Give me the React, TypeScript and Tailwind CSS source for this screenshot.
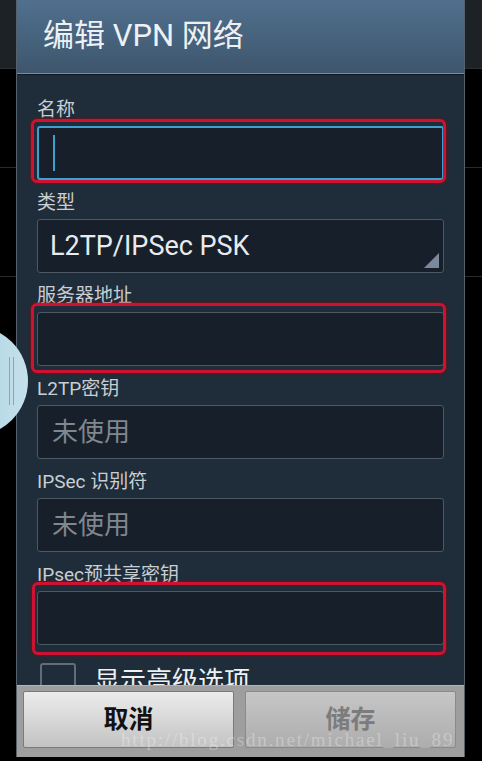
import React from 'react';

const font = { fontFamily: 'Roboto, "Noto Sans CJK SC", sans-serif' };

const Field = ({
  label,
  placeholder,
  focused,
  mark,
}: {
  label: string;
  placeholder?: string;
  focused?: boolean;
  mark?: string;
}) => (
  <div className="mb-[11px]">
    <div className="h-[24px] text-[19px] leading-[24px] text-[#c9ced3]">{label}</div>
    <div className="relative mt-[4px]">
      <div
        className={`flex h-[54px] items-center rounded-[3px] bg-[#17202a] px-[14px] ${
          focused ? 'border-2 border-[#3f9fcf]' : 'border border-[#4c5864]'
        }`}
      >
        {focused && <div className="h-[36px] w-[2px] bg-[#3f9fcf]" />}
        {placeholder && <span className="text-[26px] text-[#80878e]">{placeholder}</span>}
      </div>
      {mark && (
        <div className={`pointer-events-none absolute rounded-[6px] border-[3px] border-[#d01232] shadow-[0_0_3px_#a00] ${mark}`} />
      )}
    </div>
  </div>
);

export default function App() {
  return (
    <div className="relative h-[761px] w-[482px] overflow-hidden bg-black" style={font}>
      {/* page behind the dialog */}
      <div className="flex flex-col">
        <div className="h-[69px] border-b border-[#2c3136] bg-[#1d2227]" />
        <div className="h-[99px] border-b border-[#2a2a2a]" />
        <div className="h-[109px] border-b border-[#2a2a2a]" />
      </div>

      {/* dialog */}
      <div className="absolute left-[16px] top-0 flex h-[757px] w-[449px] flex-col border-x border-[#56616b] bg-[#1f2c39]">
        <div className="flex h-[74px] items-center border-b border-[#7d8c99] bg-gradient-to-b from-[#50708e] to-[#3e566d] pl-[26px]">
          <span className="text-[31px] text-[#eef1f4]">编辑 VPN 网络</span>
        </div>
        <div className="h-[611px] overflow-hidden border-t border-[#101a24] px-[20px] pt-[23px]">
          <Field label="名称" focused mark="-left-[6px] -right-[2px] -top-[7px] -bottom-[3px]" />
          <div className="mb-[11px]">
            <div className="h-[24px] text-[19px] leading-[24px] text-[#c9ced3]">类型</div>
            <div className="relative mt-[4px] flex h-[54px] items-center rounded-[3px] border border-[#4c5864] bg-[#17202a] px-[12px]">
              <span className="text-[27px] text-[#e8ebee]">L2TP/IPSec PSK</span>
              <svg className="absolute bottom-[4px] right-[4px]" width="15" height="15" viewBox="0 0 15 15">
                <polygon points="15,0 15,15 0,15" fill="#7a8a9c" />
              </svg>
            </div>
          </div>
          <Field label="服务器地址" mark="-left-[6px] -right-[2px] -top-[9px] -bottom-[7px]" />
          <Field label="L2TP密钥" placeholder="未使用" />
          <Field label="IPSec 识别符" placeholder="未使用" />
          <Field label="IPsec预共享密钥" mark="-left-[5px] -right-[2px] -top-[9px] -bottom-[10px]" />
          <div className="mt-[18px] flex items-start gap-[18px] pl-[3px]">
            <div className="h-[36px] w-[36px] shrink-0 rounded-[3px] border-2 border-[#636d77]" />
            <span className="text-[26px] leading-[36px] text-[#eef1f4]">显示高级选项</span>
          </div>
        </div>
        <div className="flex flex-1 gap-[11px] border-t border-[#b4b4b4] bg-[#9e9e9e] pl-[6px] pr-[8px] pt-[5px]">
          <div className="flex h-[57px] flex-1 items-center justify-center rounded-[2px] border border-[#7a7a7a] bg-gradient-to-b from-[#ececec] to-[#c3c3c3]">
            <span className="text-[25px] font-bold text-[#111]">取消</span>
          </div>
          <div className="flex h-[57px] flex-1 items-center justify-center rounded-[2px] border border-[#8a8a8a] bg-gradient-to-b from-[#c6c6c6] to-[#adadad]">
            <span className="text-[25px] font-bold text-[#7c7c7c]">储存</span>
          </div>
        </div>
      </div>

      {/* side handle */}
      <div className="absolute left-[-82px] top-[326px] h-[110px] w-[110px] rounded-full bg-gradient-to-r from-[#9cc6da] to-[#c5e1ec]">
        <div className="absolute left-[91px] top-[31px] h-[48px] w-[1px] bg-[#7ea7bb]" />
        <div className="absolute left-[95px] top-[31px] h-[48px] w-[1px] bg-[#7ea7bb]" />
      </div>

      {/* watermark */}
      <div
        className="pointer-events-none absolute left-[121px] top-[726px] text-[19px] tracking-[1.8px] text-white/30"
        style={{ fontFamily: '"Liberation Serif", serif' }}
      >
        http://blog.csdn.net/michael_liu_89
      </div>
    </div>
  );
}
